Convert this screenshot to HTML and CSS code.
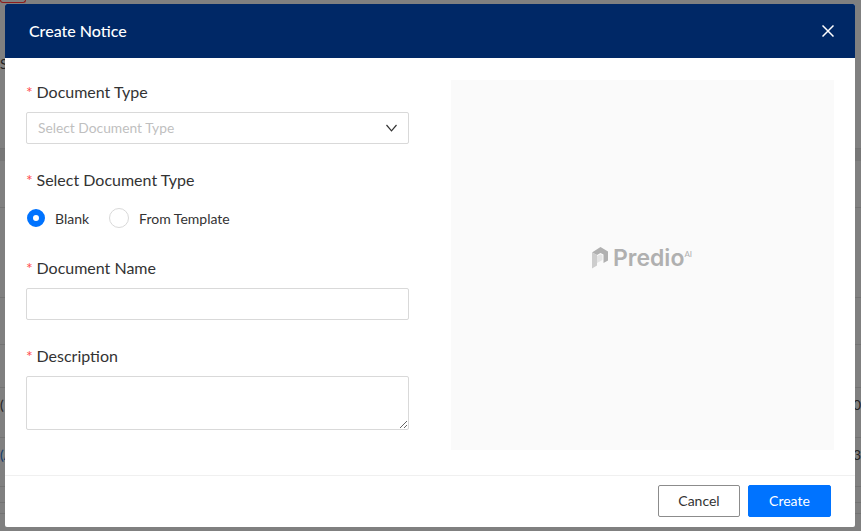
FILE: index.html
```html
<!DOCTYPE html>
<html lang="en">
  <head>
    <meta charset="UTF-8" />
    <title>Create Notice</title>
    <link rel="stylesheet" href="styles.css">
  </head>
  <body>
    <div class="backdrop">
      <div class="page-tag"></div>
      <div class="page-row text-row"><span>S</span></div>
      <div class="page-band"></div>
      <div class="page-row"></div>
      <div class="page-row"></div>
      <div class="page-row"></div>
      <div class="page-row"></div>
      <div class="page-row text-row low"><span>(</span><span>0</span></div>
      <div class="page-row text-row low"><span class="link">(A</span><span>3</span></div>
      <div class="page-row"></div>
      <div class="page-row"></div>
      <div></div>
    </div>

    <div class="modal">
      <header class="modal-header">
        <h2 class="modal-title">Create Notice</h2>
        <svg class="close-icon" width="12" height="12" viewBox="0 0 12 12">
          <path d="M0.5 0.5L11.5 11.5M11.5 0.5L0.5 11.5" stroke="#fff" stroke-width="1.5" fill="none" />
        </svg>
      </header>

      <div class="modal-body">
        <form class="notice-form">
          <div class="field">
            <label class="field-label"><span class="required">*</span>Document Type</label>
            <div class="select-box">
              <span class="placeholder">Select Document Type</span>
              <svg width="11" height="8" viewBox="0 0 11 8">
                <path d="M0.5 1L5.5 6.8L10.5 1" stroke="#333" stroke-width="1.2" fill="none" />
              </svg>
            </div>
          </div>

          <div class="field">
            <label class="field-label"><span class="required">*</span>Select Document Type</label>
            <div class="radio-group">
              <span class="radio-item"><span class="radio checked"></span>Blank</span>
              <span class="radio-item"><span class="radio"></span>From Template</span>
            </div>
          </div>

          <div class="field">
            <label class="field-label"><span class="required">*</span>Document Name</label>
            <input class="text-input" type="text" />
          </div>

          <div class="field">
            <label class="field-label"><span class="required">*</span>Description</label>
            <textarea class="text-area"></textarea>
          </div>
        </form>

        <div class="preview">
          <div class="brand">
            <svg width="16" height="22" viewBox="0 0 16 22">
              <path d="M0 5.5L8.5 0L16 4.5V13.5L11.5 16V7.5L8.5 6L5 8Z" fill="#b0b0b0" />
              <path d="M0 5.5L5 8V18.5L0 21.5Z" fill="#cdcdcd" />
              <path d="M5 9L8.5 7.2L10.5 8.2V13L5 16Z" fill="#e4e4e4" />
            </svg>
            <span class="brand-name">Predio</span><span class="brand-ai">AI</span>
          </div>
        </div>
      </div>

      <footer class="modal-footer">
        <button class="btn btn-cancel" type="button">Cancel</button>
        <button class="btn btn-create" type="button">Create</button>
      </footer>
    </div>
  </body>
</html>
```

FILE: styles.css
```css
html,
body {
  margin: 0;
  padding: 0;
  height: 100%;
  overflow: hidden;
}
body {
  font-family: Lato, "Open Sans", sans-serif;
  background-color: #808080;
  color: #333;
}
.backdrop {
  display: grid;
  grid-template-rows: 3px 146px 12px 47px 90px 47px 43px 50px 49px 16px 11px 17px;
  height: 531px;
  font-size: 14px;
  line-height: 17px;
  color: #222;
}
.page-tag {
  width: 24px;
  border: 1px solid #8c1c1c;
  border-top: 0;
  border-radius: 0 0 3px 3px;
}
.page-band {
  background-color: #777;
}
.page-row {
  box-sizing: border-box;
  display: flex;
  justify-content: space-between;
  border-bottom: 1px solid #737373;
}
.text-row {
  padding-top: 52px;
}
.text-row.low {
  padding-top: 8px;
}
.link {
  color: #0f3a6b;
}
.modal {
  position: absolute;
  left: 5px;
  top: 4px;
  width: 850px;
  height: 523px;
  display: flex;
  flex-direction: column;
  background-color: #fff;
  border-radius: 2px;
}
.modal-header {
  display: flex;
  align-items: center;
  justify-content: space-between;
  box-sizing: border-box;
  height: 54px;
  padding: 0 21px 1px 24px;
  background-color: #002866;
  border-radius: 2px 2px 0 0;
}
.modal-title {
  margin: 0;
  font-size: 16px;
  font-weight: 500;
  color: #fff;
}
.close-icon {
  margin-top: 1px;
}
.modal-body {
  flex-grow: 1;
  display: flex;
  justify-content: space-between;
  padding: 22px 21px 0 21px;
}
.notice-form {
  width: 383px;
  display: flex;
  flex-direction: column;
  padding-top: 2px;
}
.field {
  margin-bottom: 26px;
}
.field-label {
  display: block;
  height: 20px;
  margin-bottom: 10px;
  font-size: 16px;
  line-height: 20px;
  color: #333;
}
.required {
  display: inline-block;
  width: 10.5px;
  color: #ff4d4f;
  font-size: 16px;
}
.select-box {
  display: flex;
  align-items: center;
  justify-content: space-between;
  box-sizing: border-box;
  height: 32px;
  padding: 0 11px 1px;
  border: 1px solid #d9d9d9;
  border-radius: 2px;
}
.placeholder {
  font-size: 13.8px;
  color: #bfbfbf;
}
.radio-group {
  display: flex;
  gap: 20px;
  height: 22px;
  margin-top: 17px;
  margin-bottom: 3px;
}
.radio-item {
  display: flex;
  align-items: center;
  gap: 10px;
  font-size: 14px;
  color: #333;
}
.radio {
  box-sizing: border-box;
  width: 20px;
  height: 20px;
  border: 1px solid #d9d9d9;
  border-radius: 50%;
  background-color: #fff;
}
.radio.checked {
  width: 18px;
  height: 18px;
  margin-left: 1px;
  border: 6px solid #0073ff;
}
.text-input,
.text-area {
  display: block;
  box-sizing: border-box;
  width: 100%;
  margin: 0;
  border: 1px solid #d9d9d9;
  border-radius: 2px;
  background-color: #fff;
  outline: none;
}
.text-input {
  height: 32px;
}
.text-area {
  height: 54px;
  resize: vertical;
}
.preview {
  width: 383px;
  height: 370px;
  display: flex;
  align-items: center;
  justify-content: center;
  background-color: #fafafa;
}
.brand {
  display: flex;
  align-items: flex-start;
  margin-bottom: 15px;
  margin-left: -1px;
}
.brand svg {
  margin-right: 5px;
}
.brand-name {
  font-family: Inter, sans-serif;
  font-size: 23px;
  font-weight: 600;
  line-height: 22px;
  color: #b0b0b0;
}
.brand-ai {
  font-size: 8px;
  line-height: 10px;
  margin-top: 2px;
  color: #b0b0b0;
}
.modal-footer {
  display: flex;
  justify-content: flex-end;
  align-items: center;
  gap: 8px;
  height: 52px;
  padding: 0 24px 1px 0;
  box-sizing: border-box;
  border-top: 1px solid #f0f0f0;
}
.btn {
  box-sizing: border-box;
  width: 82px;
  height: 32px;
  padding: 0 0 2px;
  font-family: inherit;
  font-size: 14px;
  border-radius: 2px;
  cursor: pointer;
}
.btn-cancel {
  border: 1px solid #8c8c8c;
  background-color: #fff;
  color: #333;
}
.btn-create {
  width: 83px;
  border: 1px solid #0073ff;
  background-color: #0073ff;
  color: #fff;
}
```
